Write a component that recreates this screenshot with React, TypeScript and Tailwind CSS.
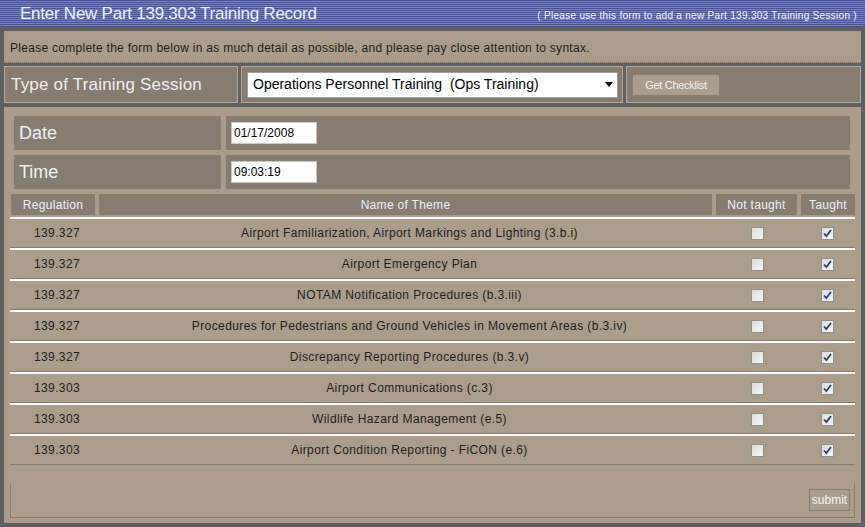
import React from "react";

const rows = [
  ["139.327", "Airport Familiarization, Airport Markings and Lighting (3.b.i)"],
  ["139.327", "Airport Emergency Plan"],
  ["139.327", "NOTAM Notification Procedures (b.3.iii)"],
  ["139.327", "Procedures for Pedestrians and Ground Vehicles in Movement Areas (b.3.iv)"],
  ["139.327", "Discrepancy Reporting Procedures (b.3.v)"],
  ["139.303", "Airport Communications (c.3)"],
  ["139.303", "Wildlife Hazard Management (e.5)"],
  ["139.303", "Airport Condition Reporting - FiCON (e.6)"],
];

function Box({ checked }: { checked?: boolean }) {
  return (
    <span className="inline-flex h-[13px] w-[13px] items-center justify-center border border-[#8e8f8f] bg-[linear-gradient(135deg,#dcdcd7_0%,#f6f6f3_100%)]">
      {checked && (
        <svg width="9" height="9" viewBox="0 0 9 9">
          <path d="M1 4.5 L3.3 7 L8 1" fill="none" stroke="#2a3d84" strokeWidth="1.8" />
        </svg>
      )}
    </span>
  );
}

export default function App() {
  return (
    <div
      className="h-[527px] w-[865px] overflow-hidden bg-[#ab9d8a]"
      style={{ fontFamily: '"Liberation Sans", Arial, sans-serif' }}
    >
      {/* title bar */}
      <div className="flex h-[27px] items-center justify-between bg-[repeating-linear-gradient(to_bottom,#4a5294_0px,#4a5294_1px,#7580c6_1px,#7580c6_2px)] pl-[20px] pr-[8px]">
        <span className="text-[17px] leading-none tracking-[-0.25px] text-[#eef2ff]">Enter New Part 139.303 Training Record</span>
        <span className="pt-[4px] text-[10px] leading-none tracking-[0.3px] text-[#f4f4ff]">
          ( Please use this form to add a new Part 139.303 Training Session )
        </span>
      </div>

      {/* frame */}
      <div className="flex h-[500px] flex-col border-4 border-[#5f5f5f] bg-[#5f5f5f]">
        <div className="flex h-[32px] items-center border-b border-dotted border-[#7a7268] bg-[#ab9d8a] pl-[6px] pt-[2px] text-[12px] tracking-[0.28px] text-[#1e1e1e]">
          Please complete the form below in as much detail as possible, and please pay close attention to syntax.
        </div>

        <div className="mt-[3px] flex h-[37px] gap-[3px]">
          <div className="flex w-[234px] items-center whitespace-nowrap border border-[#b4a893] bg-[#877c70] pl-[6px] text-[17px] tracking-[0.2px] text-[#f0f0f0]">
            Type of Training Session
          </div>
          <div className="flex w-[382px] items-center border border-[#b4a893] bg-[#877c70] pl-[5px]">
            <div className="flex h-[26px] w-[371px] items-center justify-between border border-[#a0a0a0] bg-white pl-[5px] pr-[4px] text-[14px] text-black">
              <span>Operations Personnel Training&nbsp;&nbsp;(Ops Training)</span>
              <svg width="8" height="5" viewBox="0 0 8 5">
                <path d="M0 0 H8 L4 5 Z" fill="#000" />
              </svg>
            </div>
          </div>
          <div className="flex flex-1 items-start border border-[#b4a893] bg-[#877c70] pl-[6px] pt-[8px]">
            <div className="flex h-[20px] w-[86px] items-center justify-center bg-[#ab9d8a] text-[11px] tracking-[-0.3px] text-[#f2f2f2]">
              Get Checklist
            </div>
          </div>
        </div>

        <div className="mt-[4px] flex flex-1 flex-col bg-[#ab9d8a] px-[6px] pt-[9px]">
          <div className="flex flex-col gap-[5px] pl-[4px] pr-[5px]">
            {[
              ["Date", "01/17/2008"],
              ["Time", "09:03:19"],
            ].map(([l, v]) => (
              <div key={l} className="flex h-[34px] gap-[5px]">
                <div className="flex w-[207px] items-center bg-[#877c70] pl-[5px] text-[18px] text-[#eef2f8]">{l}</div>
                <div className="flex flex-1 items-center bg-[#877c70] pl-[5px]">
                  <div className="flex h-[22px] w-[86px] items-center border border-[#c8c8c8] bg-white pl-[2px] text-[12px] text-black">
                    {v}
                  </div>
                </div>
              </div>
            ))}
          </div>

          <div className="mt-[5px] grid grid-cols-[84px_613px_81px_54px] gap-x-[4px] pl-[1px] text-[12px] text-[#eef0f8]">
            <div className="flex h-[21px] items-center justify-center bg-[#877c70] tracking-[0.3px]">Regulation</div>
            <div className="flex h-[21px] items-center justify-center bg-[#877c70] tracking-[0.3px]">Name of Theme</div>
            <div className="flex h-[21px] items-center justify-center bg-[#877c70] tracking-[0.3px]">Not taught</div>
            <div className="flex h-[21px] items-center justify-center bg-[#877c70] tracking-[0.3px]">Taught</div>
          </div>

          <div className="mt-[2px] flex w-[845px] flex-col">
            {rows.map(([reg, name], i) => (
              <div
                key={i}
                className="grid h-[31px] grid-cols-[94px_611px_84px_56px] items-center border-b border-t-2 border-b-[#857b6f] border-t-white text-[12px] tracking-[0.4px] text-[#1e1e1e]"
              >
                <div className="text-center">{reg}</div>
                <div className="text-center">{name}</div>
                <div className="flex justify-center pt-[1px]">
                  <Box />
                </div>
                <div className="flex justify-center pt-[1px]">
                  <Box checked />
                </div>
              </div>
            ))}
          </div>

          <div className="mt-[19px] flex h-[34px] w-[845px] items-start justify-end border-x border-b border-[#857b6f] pr-[4px] pt-[5px]">
            <div className="flex h-[22px] w-[41px] items-center justify-center border border-[#857b6f] text-[12px] text-[#f2f2f2]">
              submit
            </div>
          </div>
        </div>
      </div>
    </div>
  );
}
